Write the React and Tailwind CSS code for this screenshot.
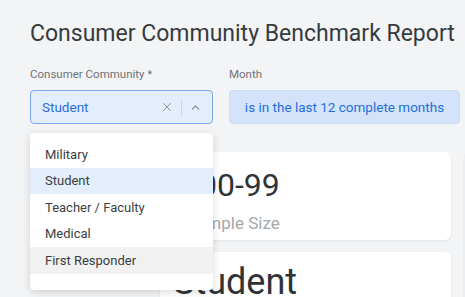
import { X, ChevronUp } from 'lucide-react';

const options = ['Military', 'Student', 'Teacher / Faculty', 'Medical', 'First Responder'];

export default function App() {
  return (
    <div
      className="relative w-[465px] h-[297px] overflow-hidden bg-[#f3f4f6] pl-[30px]"
      style={{ fontFamily: 'Roboto, "Liberation Sans", sans-serif' }}
    >
      <h1 className="pt-[20px] text-[23px] leading-[28px] text-[#363b3e] whitespace-nowrap">
        Consumer Community Benchmark Report
      </h1>

      {/* filters */}
      <div className="mt-[19px] flex gap-4">
        <div className="w-[183px]">
          <div className="text-[11.5px] leading-[14px] text-[#6f7377]">Consumer Community *</div>
          <div className="mt-[9px] h-[34px] rounded-[4px] border border-[#7aa7ec] bg-[#e4edfb] flex items-center pl-[11px] pr-[10px]">
            <span className="flex-1 text-[13.5px] text-[#1f6fe0]">Student</span>
            <X className="w-[14px] h-[14px] text-[#8d9196]" strokeWidth={1.6} />
            <div className="mx-[7px] w-px h-[17px] bg-[#cdd5e0]" />
            <ChevronUp className="w-[13px] h-[13px] text-[#80858a]" strokeWidth={2} />
          </div>
        </div>
        <div className="w-[231px]">
          <div className="text-[11.5px] leading-[14px] text-[#6f7377]">Month</div>
          <div className="mt-[9px] h-[34px] rounded-[4px] border border-[#cbdcf3] bg-[#d4e3f9] flex items-center justify-center">
            <span className="text-[13.5px] text-[#1f6fe0]">is in the last 12 complete months</span>
          </div>
        </div>
      </div>

      {/* cards */}
      <div className="mt-[28px] flex gap-3 pl-[130px]">
        <div className="w-[291px] shrink-0 flex flex-col gap-3">
          <div className="bg-white rounded-md shadow-[0_1px_3px_rgba(0,0,0,0.08)] pl-[21px] pt-[15px] h-[88px]">
            <div className="text-[32px] leading-[36px] text-[#2f3437] whitespace-nowrap">100-99</div>
            <div className="mt-[10px] ml-[6px] text-[17px] leading-[20px] text-[#a3a7ab]">Sample Size</div>
          </div>
          <div className="bg-white rounded-md shadow-[0_1px_3px_rgba(0,0,0,0.08)] pl-[13px] pt-[10px] h-[88px]">
            <div className="text-[36px] leading-[40px] text-[#2f3437] whitespace-nowrap">Student</div>
          </div>
        </div>
        <div className="w-[40px] shrink-0 h-[200px] bg-[#eceef1] rounded-md" />
      </div>

      {/* open dropdown */}
      <div className="absolute z-10 left-[30px] top-[133px] w-[183px] h-[157px] bg-white rounded-[4px] shadow-[0_2px_8px_rgba(0,0,0,0.15)] pt-[8px]">
        {options.map((o) => (
          <div
            key={o}
            className={`h-[26.5px] flex items-center pl-[15px] text-[13px] text-[#3a3f43] ${
              o === 'Student' ? 'bg-[#e3edfb]' : o === 'First Responder' ? 'bg-[#f1f1f1]' : ''
            }`}
          >
            {o}
          </div>
        ))}
      </div>
    </div>
  );
}
